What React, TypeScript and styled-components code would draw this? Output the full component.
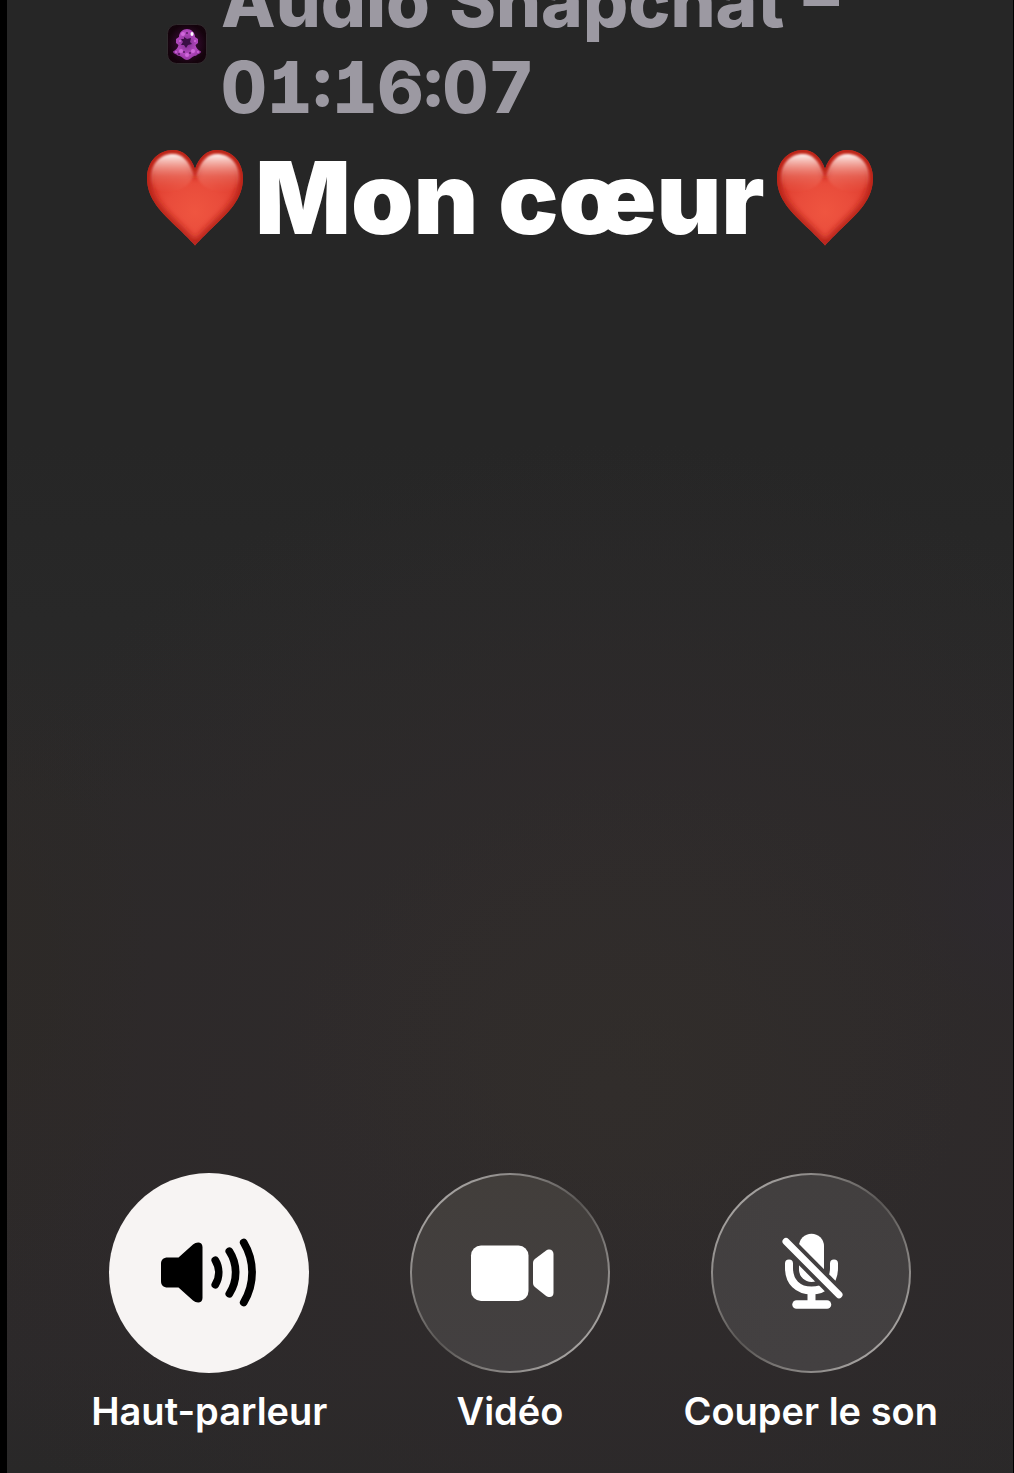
import React, { useId, useState } from "react";
import styled, { createGlobalStyle } from "styled-components";

const GlobalStyle = createGlobalStyle`
  *, *::before, *::after { box-sizing: border-box; }
  html { background: #000; }
  body {
    margin: 0;
    font-family: Inter, "Liberation Sans", sans-serif;
    -webkit-font-smoothing: antialiased;
  }
`;

const Screen = styled.main`
  display: flex;
  flex-direction: column;
  justify-content: space-between;
  min-height: 100vh;
  overflow: hidden;
  padding: 0 52px 39px;
  border-left: 7px solid #000;
  border-right: 1px solid #000;
  background:
    radial-gradient(ellipse 34% 18% at 63% 71%, rgba(50, 46, 42, 0.6), transparent),
    radial-gradient(ellipse 14% 22% at 0% 66%, rgba(45, 41, 38, 0.7), transparent),
    radial-gradient(ellipse 12% 8% at 100% 61%, rgba(46, 41, 48, 0.6), transparent),
    radial-gradient(ellipse 70% 44% at 60% 74%, #302c2c, rgba(46, 42, 43, 0.6) 60%, transparent),
    linear-gradient(#262626 0%, #262626 30%, #282828 42%, #2b2929 55%, #2d2929 75%, #2c292a 92%, #292828 100%);
`;

const Header = styled.header`
  display: flex;
  flex-direction: column;
  align-items: center;
  gap: 8px;
  margin-top: -42px;
`;

const Status = styled.div`
  display: flex;
  align-items: center;
  justify-content: center;
  gap: 14px;
`;

const StatusText = styled.p`
  margin: 0;
  max-width: 632px;
  color: #9c99a2;
  font-size: 71px;
  font-weight: 800;
  font-feature-settings: "tnum", "cv01";
  line-height: 86px;
`;

const Title = styled.h1`
  display: flex;
  align-items: center;
  justify-content: center;
  gap: 12px;
  margin: 0;
  color: #fff;
  font-size: 100px;
  font-weight: 900;
  line-height: 120px;
  white-space: nowrap;
`;

const Controls = styled.nav`
  display: grid;
  grid-template-columns: repeat(3, 1fr);
`;

const Control = styled.button`
  display: flex;
  flex-direction: column;
  align-items: center;
  gap: 15px;
  padding: 0;
  border: 0;
  background: none;
  color: #fff;
  font-family: inherit;
  font-size: 38px;
  font-weight: 600;
  line-height: 46px;
  white-space: nowrap;
  cursor: pointer;
`;

const Disc = styled.span<{ $active: boolean; $tint: string }>`
  width: 200px;
  height: 200px;
  border: 2px solid transparent;
  border-radius: 50%;
  color: ${(p) => (p.$active ? "#000" : "#fff")};
  background: ${(p) =>
    p.$active
      ? "#f7f4f3 border-box"
      : `linear-gradient(${p.$tint}, #434041) padding-box,
         linear-gradient(135deg, #aaa7a5 12%, #5a5755 50%, #aaa7a5 88%) border-box`};

  svg {
    display: block;
    margin: -2px;
  }
`;

function Heart() {
  const id = useId();
  const shape =
    "M48 95.500C45 92 40 87 33 80C14 62 0 49 0 28C0 12 11 0 26 0C36 0 44 7 48 19C52 7 60 0 70 0C85 0 96 12 96 28C96 49 82 62 63 80C56 87 51 92 48 95.500Z";
  return (
    <svg width="96" height="96" viewBox="0 0 96 96" role="img" aria-label="❤️">
      <defs>
        <radialGradient id={id + "b"} gradientUnits="userSpaceOnUse" cx="48" cy="62" r="56">
          <stop offset="0" stopColor="#ef5540" />
          <stop offset="0.5" stopColor="#e94c3b" />
          <stop offset="1" stopColor="#dc3a2b" />
        </radialGradient>
        <linearGradient id={id + "h"} x1="0" y1="0" x2="0" y2="1">
          <stop offset="0" stopColor="#fff" stopOpacity="0.95" />
          <stop offset="0.25" stopColor="#fbd6cf" stopOpacity="0.7" />
          <stop offset="0.6" stopColor="#f3a296" stopOpacity="0.3" />
          <stop offset="1" stopColor="#f08070" stopOpacity="0" />
        </linearGradient>
        <clipPath id={id + "c"}>
          <path d={shape} />
        </clipPath>
        <filter id={id + "f"} x="-20%" y="-20%" width="140%" height="140%">
          <feGaussianBlur stdDeviation="3" />
        </filter>
        <filter id={id + "s"} x="-20%" y="-20%" width="140%" height="140%">
          <feGaussianBlur stdDeviation="1" />
        </filter>
      </defs>
      <path d={shape} fill={`url(#${id}b)`} />
      <g clipPath={`url(#${id}c)`}>
        <path d={shape} fill="none" stroke="#b01d12" strokeWidth="7" filter={`url(#${id}f)`} />
        <g filter={`url(#${id}s)`}>
          <path d="M26 4C13 4 4 14 4 28C4 38 12 44 24 42C36 40 47 32 46 23C41 10 35 4 26 4Z" fill={`url(#${id}h)`} />
          <path d="M70 4C83 4 92 14 92 28C92 38 84 44 72 42C60 40 49 32 50 23C55 10 61 4 70 4Z" fill={`url(#${id}h)`} />
        </g>
      </g>
    </svg>
  );
}

function AppIcon() {
  return (
    <svg width="40" height="40" viewBox="0 0 40 40" aria-hidden="true">
      <defs>
        <radialGradient id="glow">
          <stop offset="0" stopColor="#4a1048" />
          <stop offset="1" stopColor="#14030c" />
        </radialGradient>
        <radialGradient id="ghost" cx="0.5" cy="0.45" r="0.6">
          <stop offset="0" stopColor="#7c2c8a" />
          <stop offset="0.6" stopColor="#b348bf" />
          <stop offset="1" stopColor="#8e3199" />
        </radialGradient>
      </defs>
      <rect x="0.5" y="0.5" width="39" height="39" rx="9" fill="url(#glow)" stroke="#302a2d" />
      <path
        d="M20 5C24 5 28 8 28 13L31 15L31 19L28.500 21C29 24 31 26 34 27.500C34 30 30 30 29 32C26 31 24 36 20 36C16 36 14 31 11 32C10 30 6 30 6 27.500C9 26 11 24 11.500 21L9 19L9 15L12 13C12 8 16 5 20 5Z"
        fill="url(#ghost)"
      />
      <path d="M17 13l3 2 4-1-1 4 2 2-4 1-2 3-2-3-3 0 2-3-2-3 3 0z" fill="#3a0f45" />
      <g fill="#cf68da">
        <circle cx="16" cy="10" r="2" />
        <circle cx="13" cy="17" r="1" />
        <circle cx="28" cy="17" r="1" />
        <circle cx="14" cy="27" r="2" />
        <circle cx="26" cy="27" r="2" />
        <circle cx="20" cy="31" r="2" />
        <circle cx="9" cy="28" r="1" />
        <circle cx="31" cy="28" r="1" />
      </g>
      <ellipse cx="25" cy="10" rx="1.500" ry="2" fill="#fff" />
      <g fill="#571a61">
        <circle cx="17" cy="28" r="1" />
        <circle cx="23" cy="29" r="1" />
        <circle cx="20" cy="9" r="1" />
        <circle cx="12" cy="30" r="1" />
      </g>
    </svg>
  );
}

function SpeakerIcon() {
  return (
    <svg width="200" height="200" viewBox="0 0 200 200" aria-hidden="true">
      <path
        d="M59 84.500H69.500L84 71.500C87.500 68.500 93.500 68.500 93.500 74V125C93.500 130.500 87.500 130.500 84 127.500L69.500 114.500H59C54 114.500 52 112 52 108V91C52 87 54 84.500 59 84.500Z"
        fill="currentColor"
      />
      <g fill="none" stroke="currentColor" strokeLinecap="round" strokeWidth="7.700">
        <path d="M106.300 87.200A24 24 0 0 1 106.300 111.800" />
        <path d="M120.300 78.200A39 39 0 0 1 120.300 120.800" />
        <path d="M134.700 69.500A58 58 0 0 1 134.700 129.500" />
      </g>
    </svg>
  );
}

function VideoIcon() {
  return (
    <svg width="200" height="200" viewBox="0 0 200 200" fill="currentColor" aria-hidden="true">
      <rect x="61" y="72.500" width="57.500" height="55.500" rx="10" />
      <path d="M125.500 85.500L135.500 78C139.500 75 143.500 77 143.500 81V120C143.500 124 139.500 125.500 135.500 122.500L125.500 114.500C123.800 113 123 112 123 110V90C123 88 123.800 87 125.500 85.500Z" />
    </svg>
  );
}

function MicOffIcon() {
  return (
    <svg width="200" height="200" viewBox="-1 0 200 200" aria-hidden="true">
      <defs>
        <mask id="slash-gap" maskUnits="userSpaceOnUse" x="0" y="0" width="200" height="200">
          <rect width="200" height="200" fill="#fff" />
          <path d="M70 64.500L131 126" stroke="#000" strokeWidth="15" />
        </mask>
      </defs>
      <g mask="url(#slash-gap)">
        <rect x="87" y="60.700" width="25" height="48.300" rx="12.500" fill="currentColor" />
        <g fill="none" stroke="currentColor" strokeLinecap="round" strokeWidth="8">
          <path d="M77 90.500V95C77 109 86 117.500 99.500 117.500C113 117.500 122 109 122 95V90.500" />
        </g>
      </g>
      <g fill="none" stroke="currentColor" strokeLinecap="round">
        <path d="M99.500 119V130" strokeWidth="8" strokeLinecap="butt" />
        <path d="M84.500 131.500H115" strokeWidth="8.500" />
        <path d="M74 68.500L127 121.800" strokeWidth="7" />
      </g>
    </svg>
  );
}

const controls = [
  { label: "Haut-parleur", Icon: SpeakerIcon, tint: "#434041" },
  { label: "Vidéo", Icon: VideoIcon, tint: "#423e3b" },
  { label: "Couper le son", Icon: MicOffIcon, tint: "#423f3f" },
];

export default function App() {
  const [active, setActive] = useState<Record<string, boolean>>({ "Haut-parleur": true });

  return (
    <>
      <GlobalStyle />
      <Screen>
        <Header>
          <Status>
            <AppIcon />
            <StatusText>Audio Snapchat – 01:16:07</StatusText>
          </Status>
          <Title>
            <Heart />
            <span>Mon cœur</span>
            <Heart />
          </Title>
        </Header>
        <Controls aria-label="Commandes d’appel">
          {controls.map(({ label, Icon, tint }) => (
            <Control
              key={label}
              type="button"
              aria-pressed={!!active[label]}
              onClick={() => setActive((a) => ({ ...a, [label]: !a[label] }))}
            >
              <Disc $active={!!active[label]} $tint={tint}>
                <Icon />
              </Disc>
              <span>{label}</span>
            </Control>
          ))}
        </Controls>
      </Screen>
    </>
  );
}
